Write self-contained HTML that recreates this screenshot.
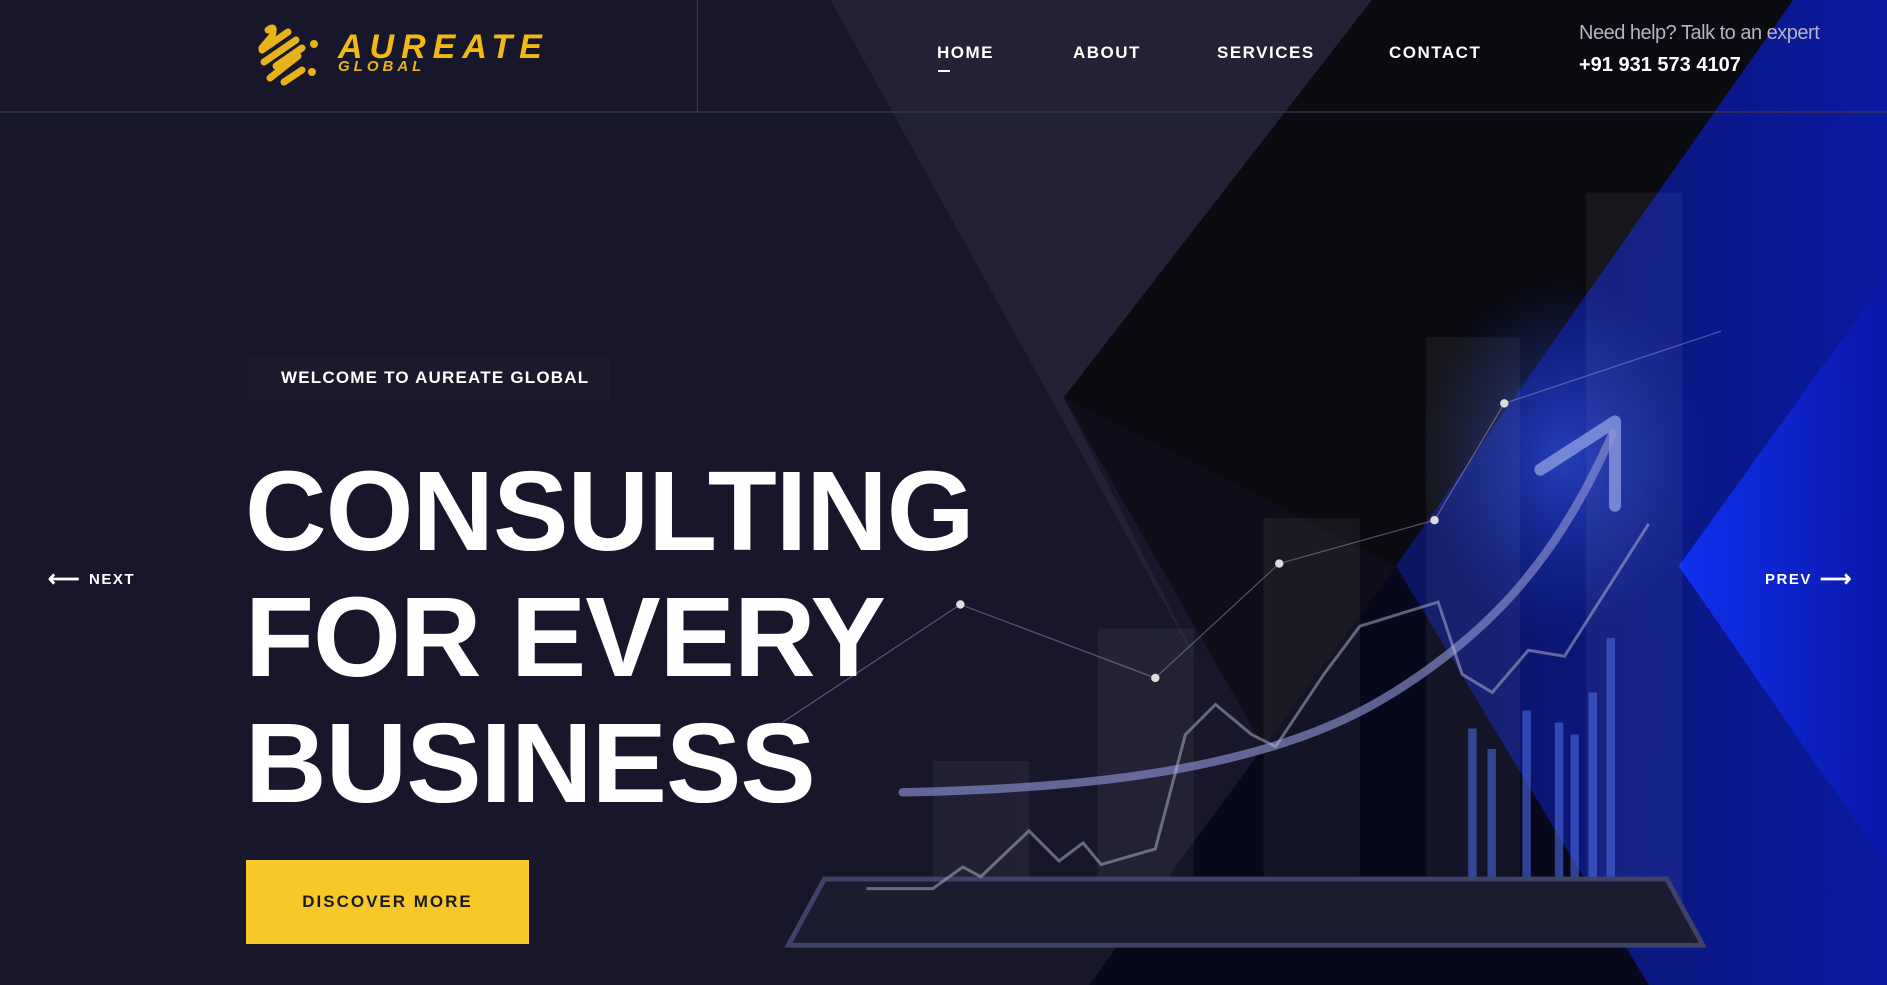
<!DOCTYPE html>
<html><head><meta charset="utf-8"><style>
*{margin:0;padding:0;box-sizing:border-box}
html,body{width:1887px;height:985px;overflow:hidden;background:#16152a;font-family:"Liberation Sans",sans-serif}
.bg{position:absolute;left:0;top:0;width:1887px;height:985px}
.a{position:absolute;white-space:nowrap}
.nav{top:43px;color:#fff;font-weight:bold;font-size:17px;letter-spacing:1.5px}
h1{position:absolute;left:245px;top:448px;color:#fff;font-size:113px;line-height:126px;font-weight:900;letter-spacing:-1px;font-family:"Liberation Sans",sans-serif}
</style></head><body>
<svg class="bg" viewBox="0 0 1568 818" preserveAspectRatio="none">
<defs>
<linearGradient id="bl" x1="0" y1="0" x2="1" y2="0"><stop offset="0" stop-color="#0b1560"/><stop offset="1" stop-color="#0a1aa0"/></linearGradient>
<linearGradient id="bd" x1="0" y1="0" x2="1" y2="0"><stop offset="0" stop-color="#1030f0"/><stop offset="1" stop-color="#0a18a8"/></linearGradient>
<radialGradient id="gl" cx=".5" cy=".5" r=".5"><stop offset="0" stop-color="#3a60f0" stop-opacity=".55"/><stop offset="1" stop-color="#2040c0" stop-opacity="0"/></radialGradient>
</defs>
<rect width="1568" height="818" fill="#17162a"/>
<polygon points="690,0 1140,0 884,330 1000,560" fill="#222135"/>
<polygon points="1140,0 1490,0 1160,470 884,330" fill="#0a0a11"/>
<polygon points="884,330 1160,470 1050,620" fill="#0e0d19"/>
<polygon points="1490,0 1568,0 1568,818 1370,818 1160,470" fill="url(#bl)"/>
<ellipse cx="1300" cy="380" rx="120" ry="150" fill="url(#gl)"/>
<polygon points="1395,470 1568,230 1568,720" fill="url(#bd)"/>
<polygon points="1160,470 1370,818 905,818" fill="#06071a" opacity=".9"/>
<g fill="#ffffff" opacity=".05"><rect x="775" y="632" width="80" height="120"/><rect x="912" y="522" width="80" height="230"/><rect x="1050" y="430" width="80" height="320"/><rect x="1185" y="280" width="78" height="470"/><rect x="1318" y="160" width="80" height="590"/></g>
<g fill="#4a6ae0" opacity=".6"><rect x="1265" y="590" width="7" height="160"/><rect x="1292" y="600" width="7" height="150"/><rect x="1305" y="610" width="7" height="140"/><rect x="1320" y="575" width="7" height="175"/><rect x="1335" y="530" width="7" height="220"/><rect x="1220" y="605" width="7" height="145"/><rect x="1236" y="622" width="7" height="128"/></g>
<path d="M655 785 L1415 785 L1385 730 L685 730 Z" fill="#1c1c30" stroke="#3e4266" stroke-width="4"/>
<path d="M750 658 C900 655 1050 640 1150 580 C1250 520 1300 450 1340 360" stroke="#8a90d0" stroke-width="7" fill="none" stroke-linecap="round" opacity=".65"/>
<path d="M1280 390 L1342 350 L1342 420" stroke="#8a9ae0" stroke-width="10" fill="none" stroke-linecap="round" stroke-linejoin="round" opacity=".8"/>
<path d="M720 738 L775 738 L800 720 L815 728 L855 690 L880 715 L900 700 L915 718 L960 705 L985 610 L1010 585 L1040 610 L1060 620 L1100 560 L1130 520 L1195 500 L1215 560 L1240 575 L1270 540 L1300 545 L1370 435" stroke="#b8b8d0" stroke-width="2.5" fill="none" opacity=".5"/>
<path d="M650 600 L798 502 L960 563 L1063 468 L1192 432 L1250 335 L1430 275" stroke="#aaaacc" stroke-width="1" fill="none" opacity=".45"/>
<g fill="#ddd"><circle cx="798" cy="502" r="3.5"/><circle cx="960" cy="563" r="3.5"/><circle cx="1063" cy="468" r="3.5"/><circle cx="1192" cy="432" r="3.5"/><circle cx="1250" cy="335" r="3.5"/></g>
<line x1="0" y1="93" x2="1568" y2="93" stroke="#3a394e" stroke-width="1"/>
<line x1="579.5" y1="0" x2="579.5" y2="93" stroke="#3a394e" stroke-width="1"/>
</svg>

<svg class="a" style="left:254px;top:20px" width="68" height="70" viewBox="0 0 68 70">
<g stroke="#e6b41a" stroke-width="7" stroke-linecap="round" fill="none">
<path d="M14 10 Q22 4 18 16 L8 28"/><path d="M8 30 L34 12"/><path d="M10 42 L42 20"/><path d="M22 46 L48 28"/><path d="M16 58 L44 36"/><path d="M30 62 L48 50"/>
</g><circle cx="60" cy="24" r="4" fill="#e6b41a"/><circle cx="58" cy="52" r="4" fill="#e6b41a"/>
</svg>
<div class="a" style="left:338px;top:28px;font-size:34px;font-weight:bold;font-style:italic;color:#f0b915;letter-spacing:7px">AUREATE</div>
<div class="a" style="left:338px;top:58px;font-size:15px;font-weight:bold;font-style:italic;color:#e6b41a;letter-spacing:4px">GLOBAL</div>

<div class="a nav" style="left:937px">HOME</div>
<div class="a" style="left:938px;top:70px;width:12px;height:2px;background:#fff"></div>
<div class="a nav" style="left:1073px">ABOUT</div>
<div class="a nav" style="left:1217px">SERVICES</div>
<div class="a nav" style="left:1389px">CONTACT</div>
<div class="a" style="left:1579px;top:22px;font-size:20px;color:#b4b4c2;letter-spacing:-.5px">Need help? Talk to an expert</div>
<div class="a" style="left:1579px;top:54px;font-size:20px;color:#fff;font-weight:bold">+91 931 573 4107</div>

<div class="a" style="left:247px;top:355px;width:363px;height:46px;background:#1b1a2c"></div>
<div class="a" style="left:281px;top:368px;font-size:17px;color:#fff;font-weight:bold;letter-spacing:1.2px">WELCOME TO AUREATE GLOBAL</div>
<h1>CONSULTING<br>FOR EVERY<br>BUSINESS</h1>
<div class="a" style="left:246px;top:860px;width:283px;height:84px;background:#f7c928;color:#1a1a26;font-weight:bold;font-size:17px;letter-spacing:2px;text-align:center;line-height:84px">DISCOVER MORE</div>

<div class="a" style="left:48px;top:566px;color:#fff;font-size:15px;font-weight:bold;letter-spacing:1.5px"><span style="font-size:22px;vertical-align:-2px;margin-right:8px">⟵</span>NEXT</div>
<div class="a" style="left:1765px;top:566px;color:#fff;font-size:15px;font-weight:bold;letter-spacing:1.5px">PREV<span style="font-size:22px;vertical-align:-2px;margin-left:8px">⟶</span></div>
</body></html>
